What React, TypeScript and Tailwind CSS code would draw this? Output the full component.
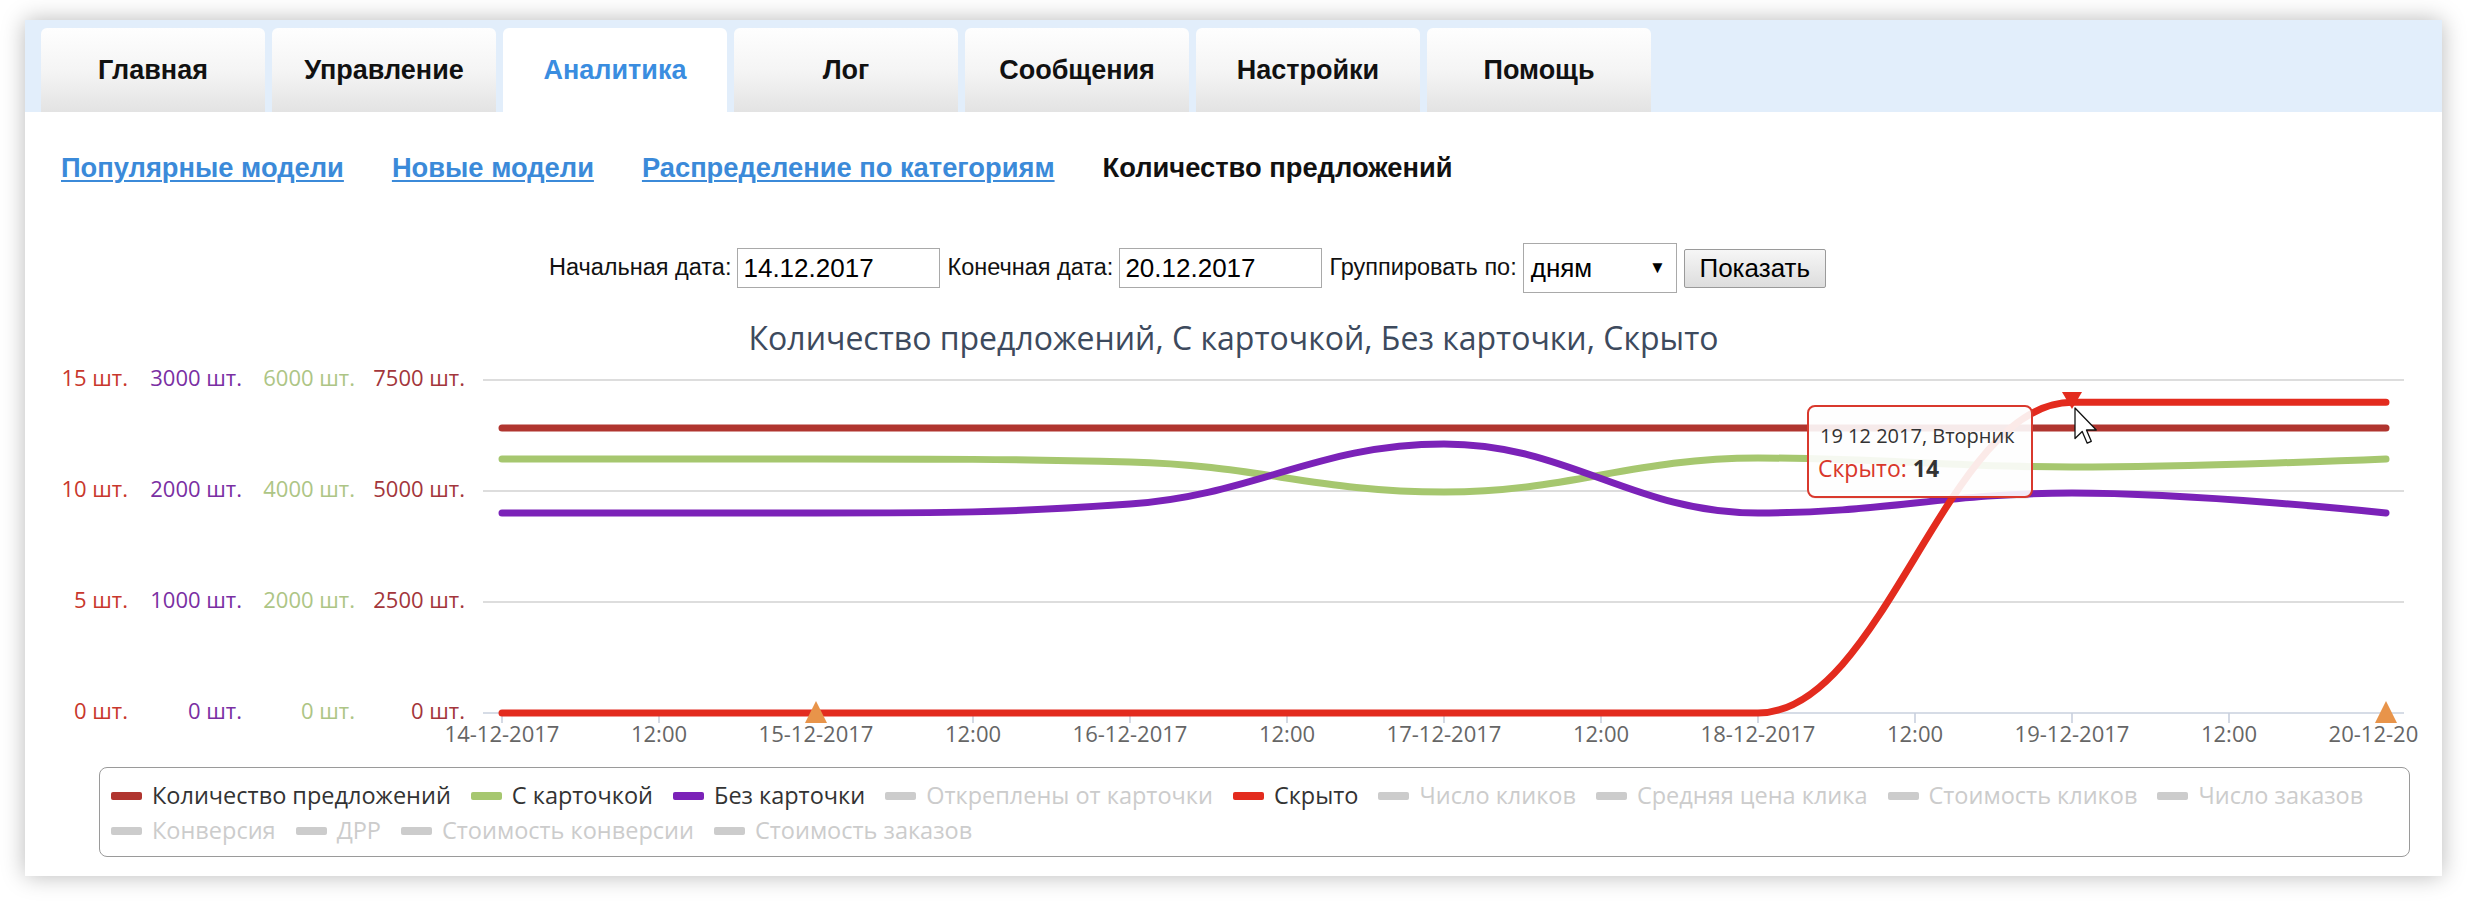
import React from "react";

const X0 = 502;
const STEP = 314;
const xd = (d: number) => X0 + STEP * d;
const yv = (v: number) => 713 - v * 22.2;

type P = [number, number];

function spline(ys: number[]): string {
  const pts: P[] = ys.map((y, i) => [xd(i), y]);
  const n = pts.length;
  const sm = 1.5;
  const den = sm + 1;
  const left: P[] = [];
  const right: P[] = [];
  for (let i = 0; i < n; i++) {
    const [px, py] = pts[i];
    if (i === 0 || i === n - 1) {
      left[i] = [px, py];
      right[i] = [px, py];
      continue;
    }
    const [lx, ly] = pts[i - 1];
    const [nx, ny] = pts[i + 1];
    const lcx = (sm * px + lx) / den;
    let lcy = (sm * py + ly) / den;
    const rcx = (sm * px + nx) / den;
    let rcy = (sm * py + ny) / den;
    const corr = ((rcy - lcy) * (rcx - px)) / (rcx - lcx) + py - rcy;
    lcy += corr;
    rcy += corr;
    if (lcy > ly && lcy > py) {
      lcy = Math.max(ly, py);
      rcy = 2 * py - lcy;
    } else if (lcy < ly && lcy < py) {
      lcy = Math.min(ly, py);
      rcy = 2 * py - lcy;
    }
    if (rcy > ny && rcy > py) {
      rcy = Math.max(ny, py);
      lcy = 2 * py - rcy;
    } else if (rcy < ny && rcy < py) {
      rcy = Math.min(ny, py);
      lcy = 2 * py - rcy;
    }
    left[i] = [lcx, lcy];
    right[i] = [rcx, rcy];
  }
  let d = `M${pts[0][0]},${pts[0][1]}`;
  for (let i = 1; i < n; i++) {
    d += ` C${right[i - 1][0]},${right[i - 1][1]} ${left[i][0]},${left[i][1]} ${pts[i][0]},${pts[i][1]}`;
  }
  return d;
}

const tabs = ["Главная", "Управление", "Аналитика", "Лог", "Сообщения", "Настройки", "Помощь"];

const yCols: { x: number; color: string; vals: string[] }[] = [
  { x: 128, color: "#c8372c", vals: ["15 шт.", "10 шт.", "5 шт.", "0 шт."] },
  { x: 242, color: "#7a2fa3", vals: ["3000 шт.", "2000 шт.", "1000 шт.", "0 шт."] },
  { x: 355, color: "#adc585", vals: ["6000 шт.", "4000 шт.", "2000 шт.", "0 шт."] },
  { x: 465, color: "#a3363b", vals: ["7500 шт.", "5000 шт.", "2500 шт.", "0 шт."] },
];
const gridYs = [380, 491, 602, 713];

const legendRow1: { label: string; color: string; active: boolean }[] = [
  { label: "Количество предложений", color: "#b0352f", active: true },
  { label: "С карточкой", color: "#a6c76f", active: true },
  { label: "Без карточки", color: "#7b22b8", active: true },
  { label: "Откреплены от карточки", color: "#cccccc", active: false },
  { label: "Скрыто", color: "#e32b1e", active: true },
  { label: "Число кликов", color: "#cccccc", active: false },
  { label: "Средняя цена клика", color: "#cccccc", active: false },
  { label: "Стоимость кликов", color: "#cccccc", active: false },
  { label: "Число заказов", color: "#cccccc", active: false },
];
const legendRow2 = [
  { label: "Конверсия", color: "#cccccc", active: false },
  { label: "ДРР", color: "#cccccc", active: false },
  { label: "Стоимость конверсии", color: "#cccccc", active: false },
  { label: "Стоимость заказов", color: "#cccccc", active: false },
];

function LegendItem({ label, color, active }: { label: string; color: string; active: boolean }) {
  return (
    <div className="flex items-center gap-[10px] mr-[20px] whitespace-nowrap">
      <div className="w-[31px] h-[8px] rounded-[2px]" style={{ backgroundColor: color }} />
      <span className={active ? "text-[#333333]" : "text-[#cccccc]"}>{label}</span>
    </div>
  );
}

function Chart() {
  const darkRed = spline([428, 428, 428, 428, 428, 428, 428]);
  const green = spline([459, 459, 462, 492, 458, 467, 459]);
  const purple = spline([513, 513, 504, 444, 513, 493, 513]);
  const red = spline([713, 713, 713, 713, 713, yv(14), yv(14)]);
  const xLabels: { x: number; t: string }[] = [];
  const days = ["14-12-2017", "15-12-2017", "16-12-2017", "17-12-2017", "18-12-2017", "19-12-2017", "20-12-2017"];
  for (let d = 0; d <= 6; d++) {
    xLabels.push({ x: xd(d), t: days[d] });
    if (d < 6) xLabels.push({ x: xd(d + 0.5), t: "12:00" });
  }
  return (
    <svg width={2417} height={404} viewBox="25 358 2417 404" className="block" fontFamily="'Open Sans', sans-serif">
      <defs>
        <clipPath id="xclip">
          <rect x={25} y={700} width={2394} height={60} />
        </clipPath>
      </defs>
      {gridYs.map((y, i) => (
        <line key={i} x1={483} x2={2404} y1={y} y2={y} stroke={i === 3 ? "#c9d0de" : "#d2d2d2"} strokeWidth={1.6} />
      ))}
      {xLabels.map((l, i) => (
        <line key={i} x1={l.x} x2={l.x} y1={713} y2={723} stroke="#c9d0de" strokeWidth={1.6} />
      ))}
      {yCols.map((c, ci) =>
        c.vals.map((v, ri) => (
          <text key={`${ci}-${ri}`} x={c.x} y={gridYs[ri] + 6} textAnchor="end" fontSize={22} fill={c.color}>
            {v}
          </text>
        ))
      )}
      <g clipPath="url(#xclip)">
        {xLabels.map((l, i) => (
          <text key={i} x={l.x} y={742} textAnchor="middle" fontSize={22} fill="#666666">
            {l.t}
          </text>
        ))}
      </g>
      <g fill="none" strokeWidth={7} strokeLinecap="round" strokeLinejoin="round">
        <path d={darkRed} stroke="#b0352f" />
        <path d={green} stroke="#a6c76f" />
        <path d={purple} stroke="#7b22b8" />
        <path d={red} stroke="#e32b1e" />
      </g>
      <polygon points={`${xd(1) - 11},723 ${xd(1) + 11},723 ${xd(1)},701`} fill="#e8944a" />
      <polygon points={`${xd(6) - 11},723 ${xd(6) + 11},723 ${xd(6)},701`} fill="#e8944a" />
      <polygon points={`${xd(5) - 10},392 ${xd(5) + 10},392 ${xd(5)},409`} fill="#e32b1e" />
      {/* tooltip */}
      <g>
        <rect x={1809} y={408} width={224} height={91} rx={7} fill="#000" opacity={0.06} />
        <rect x={1808} y={406} width={224} height={91} rx={7} fill="#ffffff" fillOpacity={0.9} stroke="#d9392d" strokeWidth={2} />
        <text x={1820} y={443} fontSize={20} fill="#333333">
          19 12 2017, Вторник
        </text>
        <text x={1818} y={477} fontSize={23} fill="#333333">
          <tspan fill="#d9372b">Скрыто</tspan>
          <tspan fill="#d9372b">: </tspan>
          <tspan fontWeight={700}>14</tspan>
        </text>
      </g>
      {/* cursor */}
      <path
        d="M0 0 L0 16.5 L3.9 12.7 L6.6 19 L8.8 18 L6.2 11.9 L11.5 11.9 Z"
        transform="translate(2075 408) scale(1.85)"
        fill="#ffffff"
        stroke="#111111"
        strokeWidth={0.7}
        strokeLinejoin="round"
      />
    </svg>
  );
}

export default function App() {
  return (
    <div className="w-[2474px] h-[904px] bg-white overflow-hidden pt-[20px] pl-[25px]">
      <div className="w-[2417px] h-[856px] bg-white shadow-[0_0_22px_rgba(0,0,0,0.28)] flex flex-col">
        <div className="h-[92px] shrink-0 bg-[#e2eefb] pt-[8px] pl-[16px] flex gap-[7px] font-['Liberation_Sans',Arial,sans-serif]">
          {tabs.map((t, i) =>
            i === 2 ? (
              <div key={t} className="w-[224px] h-[84px] rounded-t-[6px] bg-white flex items-center justify-center text-[27px] font-bold text-[#3a8de0]">
                {t}
              </div>
            ) : (
              <div key={t} className="w-[224px] h-[84px] rounded-t-[6px] bg-linear-to-b from-[#fefefe] via-[#f5f5f5] to-[#e3e3e3] flex items-center justify-center text-[27px] font-bold text-[#111111]">
                {t}
              </div>
            )
          )}
        </div>

        <div className="mt-[41px] h-[30px] pl-[36px] flex gap-[48px] text-[27.3px] leading-[30px] font-bold font-['Liberation_Sans',Arial,sans-serif] whitespace-nowrap">
          <span className="text-[#3b8ad9] underline decoration-2 underline-offset-[3px]">Популярные модели</span>
          <span className="text-[#3b8ad9] underline decoration-2 underline-offset-[3px]">Новые модели</span>
          <span className="text-[#3b8ad9] underline decoration-2 underline-offset-[3px]">Распределение по категориям</span>
          <span className="text-[#111111]">Количество предложений</span>
        </div>

        <div className="mt-[59px] h-[52px] pl-[524px] flex items-center gap-[6px] text-[23.5px] text-[#111111] font-['Liberation_Sans',Arial,sans-serif] whitespace-nowrap">
          <span>Начальная дата:</span>
          <div className="w-[203px] h-[40px] border border-[#a9a9a9] bg-white flex items-center pl-[5px] text-black text-[26px]">14.12.2017</div>
          <span className="ml-[1px]">Конечная дата:</span>
          <div className="w-[203px] h-[40px] border border-[#a9a9a9] bg-white flex items-center pl-[5px] text-black text-[26px]">20.12.2017</div>
          <span className="ml-[1px]">Группировать по:</span>
          <div className="w-[154px] h-[50px] border border-[#a9a9a9] bg-white flex items-center justify-between pl-[7px] pr-[10px] text-black text-[26px]">
            <span>дням</span>
            <span className="text-[17px]">▼</span>
          </div>
          <div className="ml-[1px] w-[142px] h-[39px] border border-[#9a9a9a] rounded-[2px] bg-linear-to-b from-[#f6f6f6] to-[#dddddd] flex items-center justify-center text-black text-[26px]">
            Показать
          </div>
        </div>

        <div className="mt-[24px] h-[40px] leading-[40px] text-center text-[32px] text-[#3d4a5d] font-['Open_Sans',sans-serif] whitespace-nowrap">
          Количество предложений, С карточкой, Без карточки, Скрыто
        </div>

        <Chart />

        <div className="mt-[5px] ml-[74px] w-[2311px] h-[90px] border-[1.5px] border-[#9a9a9a] rounded-[8px] pt-[10px] pl-[11px] text-[23.5px] font-['Open_Sans',sans-serif]">
          <div className="h-[35px] flex items-center">
            {legendRow1.map((l) => (
              <LegendItem key={l.label} {...l} />
            ))}
          </div>
          <div className="h-[35px] flex items-center">
            {legendRow2.map((l) => (
              <LegendItem key={l.label} {...l} />
            ))}
          </div>
        </div>
      </div>
    </div>
  );
}
